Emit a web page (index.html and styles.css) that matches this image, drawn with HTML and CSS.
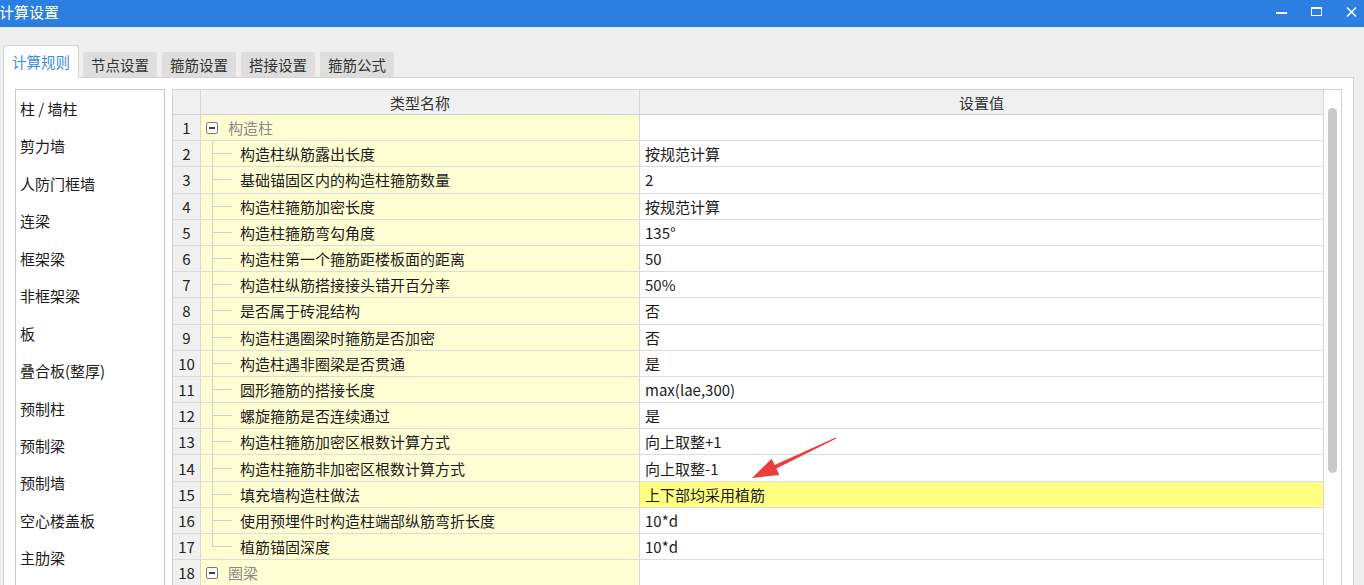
FILE: index.html
```html
<!DOCTYPE html>
<html lang="zh-CN">
<head>
<meta charset="utf-8">
<title>计算设置</title>
<link rel="stylesheet" href="styles.css">
</head>
<body>
<div class="title-bar">
  <span class="title">计算设置</span>
  <div class="win-ctrls">
    <svg class="ctl" width="12" height="12" viewBox="0 0 12 12"><rect x="0" y="6" width="11" height="2" fill="#fff"/></svg>
    <svg class="ctl" width="12" height="12" viewBox="0 0 12 12"><rect x="0.5" y="1.5" width="10" height="8" fill="none" stroke="#fff" stroke-width="1"/><rect x="0" y="1" width="11" height="2" fill="#fff"/></svg>
    <svg class="ctl" width="12" height="12" viewBox="0 0 12 12"><path d="M1 1.5 L10 10.5 M10 1.5 L1 10.5" stroke="#fff" stroke-width="1.6"/></svg>
  </div>
</div>
<div class="tabs">
  <div class="tab active">计算规则</div>
  <div class="tab">节点设置</div>
  <div class="tab">箍筋设置</div>
  <div class="tab">搭接设置</div>
  <div class="tab">箍筋公式</div>
</div>
<div class="panel">
  <ul class="side-list">
    <li>柱 / 墙柱</li>
    <li>剪力墙</li>
    <li>人防门框墙</li>
    <li>连梁</li>
    <li>框架梁</li>
    <li>非框架梁</li>
    <li>板</li>
    <li>叠合板(整厚)</li>
    <li>预制柱</li>
    <li>预制梁</li>
    <li>预制墙</li>
    <li>空心楼盖板</li>
    <li>主肋梁</li>
  </ul>
  <div class="grid-frame">
    <div class="grid">
      <div class="hd num"></div><div class="hd">类型名称</div><div class="hd">设置值</div>

      <div class="num">1</div><div class="name group"><span class="minus"></span>构造柱</div><div class="val"></div>
      <div class="num">2</div><div class="name"><span class="guide"></span>构造柱纵筋露出长度</div><div class="val">按规范计算</div>
      <div class="num">3</div><div class="name"><span class="guide"></span>基础锚固区内的构造柱箍筋数量</div><div class="val">2</div>
      <div class="num">4</div><div class="name"><span class="guide"></span>构造柱箍筋加密长度</div><div class="val">按规范计算</div>
      <div class="num">5</div><div class="name"><span class="guide"></span>构造柱箍筋弯勾角度</div><div class="val">135°</div>
      <div class="num">6</div><div class="name"><span class="guide"></span>构造柱第一个箍筋距楼板面的距离</div><div class="val">50</div>
      <div class="num">7</div><div class="name"><span class="guide"></span>构造柱纵筋搭接接头错开百分率</div><div class="val">50%</div>
      <div class="num">8</div><div class="name"><span class="guide"></span>是否属于砖混结构</div><div class="val">否</div>
      <div class="num">9</div><div class="name"><span class="guide"></span>构造柱遇圈梁时箍筋是否加密</div><div class="val">否</div>
      <div class="num">10</div><div class="name"><span class="guide"></span>构造柱遇非圈梁是否贯通</div><div class="val">是</div>
      <div class="num">11</div><div class="name"><span class="guide"></span>圆形箍筋的搭接长度</div><div class="val">max(lae,300)</div>
      <div class="num">12</div><div class="name"><span class="guide"></span>螺旋箍筋是否连续通过</div><div class="val">是</div>
      <div class="num">13</div><div class="name"><span class="guide"></span>构造柱箍筋加密区根数计算方式</div><div class="val">向上取整+1</div>
      <div class="num">14</div><div class="name"><span class="guide"></span>构造柱箍筋非加密区根数计算方式</div><div class="val">向上取整-1</div>
      <div class="num">15</div><div class="name"><span class="guide"></span>填充墙构造柱做法</div><div class="val hl">上下部均采用植筋</div>
      <div class="num">16</div><div class="name"><span class="guide"></span>使用预埋件时构造柱端部纵筋弯折长度</div><div class="val">10*d</div>
      <div class="num">17</div><div class="name"><span class="guide last"></span>植筋锚固深度</div><div class="val">10*d</div>
      <div class="num">18</div><div class="name group"><span class="minus"></span>圈梁</div><div class="val"></div>
    </div>
    <div class="vscroll"><div class="thumb"></div></div>
  </div>
</div>
<svg class="arrow" width="110" height="60" viewBox="740 430 110 60">
  <polygon points="752,478 771.6,458.7 774.6,465 835.7,437.4 836.3,438.6 776.4,468.6 779.4,474.9" fill="#ee3b3b"/>
</svg>
</body>
</html>
```
FILE: styles.css
```css
html, body {
  margin: 0;
  padding: 0;
}
body {
  width: 1364px;
  height: 585px;
  overflow: hidden;
  background: #efefef;
  font-family: "Noto Sans CJK SC", "Noto Sans", sans-serif;
  font-size: 15px;
  color: #1c1c1c;
  position: relative;
}
.title-bar {
  height: 27px;
  background: #2b7fe0;
  display: flex;
  align-items: center;
  justify-content: space-between;
}
.title {
  color: #fff;
  font-size: 15px;
  margin-left: -1px;
  margin-top: -5px;
}
.win-ctrls {
  display: flex;
  gap: 23px;
  margin-right: 6px;
  margin-top: -3px;
}
.ctl { display: block; }
.tabs {
  height: 50px;
  display: flex;
  align-items: flex-end;
  padding-left: 3px;
}
.tab {
  width: 74px;
  height: 25px;
  margin-left: 5px;
  background: #dedede;
  border-radius: 2px 2px 0 0;
  display: flex;
  align-items: center;
  justify-content: center;
  font-size: 14.5px;
  color: #333;
}
.tab.active {
  width: 74px;
  height: 31px;
  margin-left: 0;
  margin-right: -1px;
  background: #fff;
  border: 1px solid #d4d4d4;
  border-bottom: none;
  border-radius: 3px 3px 0 0;
  color: #3b8ee2;
  position: relative;
  z-index: 1;
  margin-bottom: -1px;
  padding-bottom: 1px;
}
.panel {
  margin-left: 3px;
  width: 1349px;
  height: 540px;
  background: #fff;
  border: 1px solid #d4d4d4;
  display: flex;
  align-items: flex-start;
}
.side-list {
  list-style: none;
  margin: 11px 0 0 11px;
  padding: 0 0 0 4px;
  width: 144px;
  height: 520px;
  border: 1px solid #c8c8c8;
  overflow: hidden;
}
.side-list li {
  height: 37.45px;
  line-height: 37.45px;
  white-space: nowrap;
}
.grid-frame {
  margin: 11px 0 0 7px;
  border: 1px solid #d2d2d2;
  display: flex;
  height: 520px;
  overflow: hidden;
}
.grid {
  display: grid;
  grid-template-columns: 28px 439px 684px;
  grid-template-rows: 25px;
  grid-auto-rows: 26.2px;
}
.grid > div {
  box-sizing: border-box;
  border-right: 1px solid #d6d6d6;
  border-bottom: 1px solid #dcdcdc;
  display: flex;
  align-items: center;
  white-space: nowrap;
  overflow: hidden;
}
.grid .hd {
  background: #f0f0f0;
  justify-content: center;
  color: #333;
  border-bottom-color: #d0d0d0;
}
.grid .num {
  background: #f0f0f0;
  justify-content: center;
  color: #222;
  font-size: 15px;
}
.grid .name {
  background: #fffed3;
  padding-left: 0;
}
.grid .val {
  background: #fff;
  padding-left: 5px;
}
.grid .val.hl {
  background: #ffff82;
}
.grid .group {
  color: #8a8a8a;
  padding-left: 5px;
}
.minus {
  box-sizing: border-box;
  width: 12px;
  height: 12px;
  border: 1px solid #7a7a7a;
  border-radius: 2px;
  margin-right: 10px;
  background: linear-gradient(#444, #444) center / 6px 2px no-repeat #fff;
  flex: none;
}
.guide {
  align-self: stretch;
  width: 39px;
  flex: none;
  background-image: linear-gradient(#cfcfcf, #cfcfcf), linear-gradient(#cfcfcf, #cfcfcf);
  background-size: 1px 100%, 20px 1px;
  background-position: 11px 0, 11px 50%;
  background-repeat: no-repeat;
}
.guide.last {
  background-size: 1px 50%, 20px 1px;
}
.vscroll {
  width: 17px;
  background: #fff;
  padding-top: 18px;
  box-sizing: border-box;
}
.thumb {
  width: 9px;
  height: 365px;
  margin-left: 4px;
  background: #c9c9c9;
  border-radius: 5px;
}
.arrow {
  position: absolute;
  left: 740px;
  top: 430px;
}
```
